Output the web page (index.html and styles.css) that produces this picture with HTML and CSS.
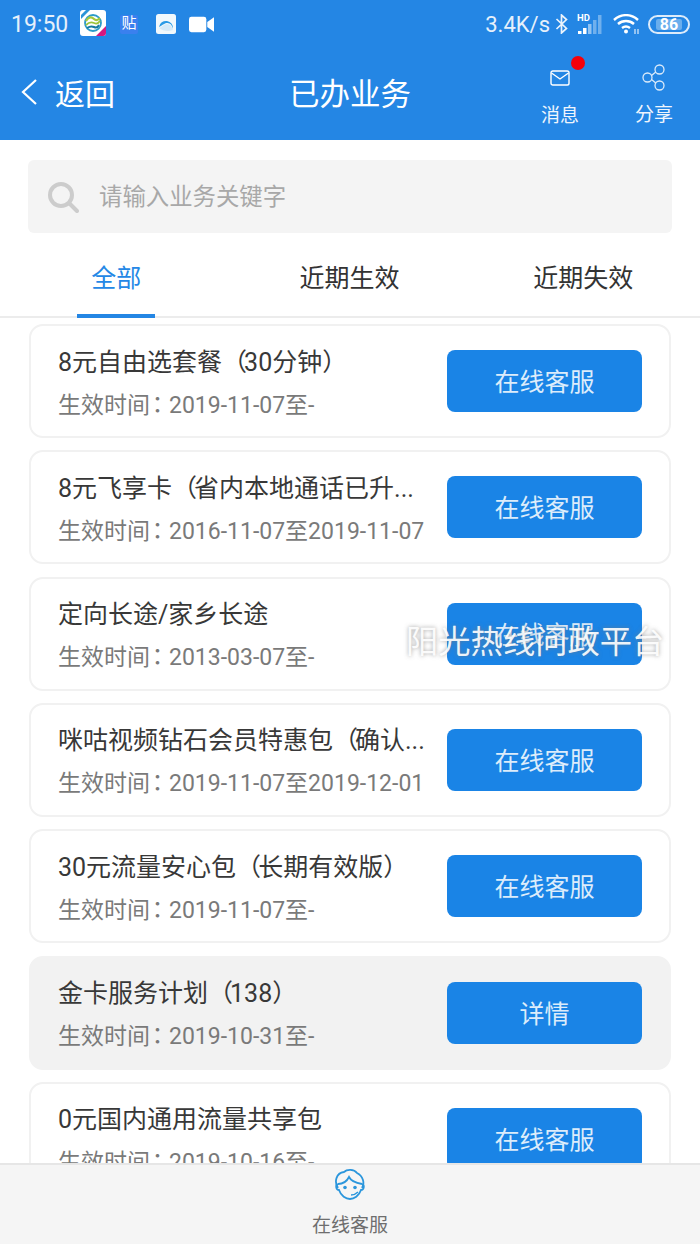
FILE: index.html
```html
<!DOCTYPE html>
<html lang="zh">
<head>
<meta charset="utf-8">
<title>已办业务</title>
<link rel="stylesheet" href="styles.css">
</head>
<body>
<div class="app">
  <header class="head">
    <div class="status">
      <span class="clock">19:50</span>
      <svg class="ic-mobile" viewBox="0 0 26 26"><rect width="26" height="26" rx="3" fill="#fff"/><path d="M16 26L26 16v7a3 3 0 0 1-3 3z" fill="#d6187f"/><path d="M1 5l5-5h4L1 9z" fill="#2a93d8"/><ellipse cx="13" cy="13" rx="8" ry="8" fill="none" stroke="#2c9bc9" stroke-width="1.800"/><path d="M6 11c3-5 6-4 8-2s4 1 6-1" fill="none" stroke="#a6c93a" stroke-width="2.200"/><path d="M6 15c3-3 6-3 8-2s4 1 6-2" fill="none" stroke="#9cc43c" stroke-width="1.800"/><path d="M7 18c3-2 5-2 7-1s4 0 5-2" fill="none" stroke="#15799f" stroke-width="2"/></svg>
      <span class="ic-tie">贴</span>
      <svg class="ic-q" viewBox="0 0 20 20"><rect width="20" height="20" rx="2.500" fill="#f1f8fc"/><path d="M3 13a7 7 0 1 1 14 2c-1-4-2.500-6-5.500-6S7 11 3 13z" fill="#2b9be6"/><path d="M3 14c3-1 5-4 8-4 3 0 5 2 6 6-5 2-10 1-14-2z" fill="#d5eaf8"/></svg>
      <svg class="ic-cam" viewBox="0 0 26 17"><rect width="18" height="16" y=".5" rx="2.500" fill="#fff"/><path d="M19 6l7-5v15l-7-5z" fill="#fff"/></svg>
      <span class="status-gap"></span>
      <span class="speed">3.4K/s</span>
      <svg class="ic-bt" viewBox="0 0 14 20"><path d="M1.500 5l10 9.500L6.500 19V1l5 4.500-10 9.500" fill="none" stroke="#eaf3fc" stroke-width="1.700"/></svg>
      <svg class="ic-signal" viewBox="0 0 27 20"><text class="hd" x="0" y="7">HD</text><rect x="1" y="17" width="3.500" height="3" fill="#fff"/><rect x="6" y="14" width="3.500" height="6" fill="#fff"/><rect x="11" y="10" width="3.500" height="10" fill="#fff" opacity=".5"/><rect x="16" y="6" width="3.500" height="14" fill="#fff" opacity=".35"/><rect x="21" y="1" width="3.500" height="19" fill="#fff" opacity=".35"/></svg>
      <svg class="ic-wifi" viewBox="0 0 27 20"><path d="M1 6c7-6.500 17-6.500 24 0M5 10c4.500-4 11.500-4 16 0M9 14c2.500-2 5.500-2 8 0" fill="none" stroke="#fff" stroke-width="2.400"/><circle cx="13" cy="17.500" r="2" fill="#fff"/><path d="M22 15v5M25 15v5" stroke="#dcebfa" stroke-width="1.200"/></svg>
      <span class="batt"><span class="batt-fill"></span><span class="batt-num">86</span></span>
    </div>
    <div class="bar">
      <div class="back">
        <svg class="ic-back" viewBox="0 0 18 28"><path d="M16 2L3 14l13 12" fill="none" stroke="#fff" stroke-width="2.200"/></svg>
        <span>返回</span>
      </div>
      <h1 class="title">已办业务</h1>
      <div class="actions">
        <div class="action">
          <svg class="ic-mail" viewBox="0 0 20 16"><rect x="1" y="1" width="18" height="14" rx="1.800" fill="none" stroke="#fff" stroke-width="1.400"/><path d="M1.500 3l8.500 6 8.500-6" fill="none" stroke="#fff" stroke-width="1.400"/></svg>
          <span class="dot"></span>
          <span>消息</span>
        </div>
        <div class="action">
          <svg class="ic-share" viewBox="0 0 24 27"><circle cx="17.500" cy="5.500" r="4.500" fill="none" stroke="#dcebfa" stroke-width="1.300"/><circle cx="17.500" cy="21.500" r="4.500" fill="none" stroke="#dcebfa" stroke-width="1.300"/><circle cx="5.500" cy="13.500" r="4.500" fill="none" stroke="#dcebfa" stroke-width="1.300"/><path d="M9.500 11.500l4.300-3.500M9.500 15.500l4.300 3.500" stroke="#dcebfa" stroke-width="1.300"/></svg>
          <span>分享</span>
        </div>
      </div>
    </div>
  </header>

  <div class="search">
    <svg class="ic-search" viewBox="0 0 32 32"><circle cx="14" cy="14" r="11" fill="none" stroke="#ccc" stroke-width="4"/><path d="M23 23l7 7" stroke="#ccc" stroke-width="4" stroke-linecap="round"/></svg>
    <span>请输入业务关键字</span>
  </div>

  <nav class="tabs">
    <div class="tab on">全部</div>
    <div class="tab">近期生效</div>
    <div class="tab">近期失效</div>
  </nav>

  <main class="list">
    <div class="card"><div class="info"><div class="name">8元自由选套餐<span class="pl">（</span>30分钟）</div><div class="date">生效时间<span class="colon">：</span>2019-11-07至-</div></div><div class="btn">在线客服</div></div>
    <div class="card"><div class="info"><div class="name">8元飞享卡<span class="pl">（</span>省内本地通话已升...</div><div class="date">生效时间<span class="colon">：</span>2016-11-07至2019-11-07</div></div><div class="btn">在线客服</div></div>
    <div class="card"><div class="info"><div class="name">定向长途/家乡长途</div><div class="date">生效时间<span class="colon">：</span>2013-03-07至-</div></div><div class="btn">在线客服</div></div>
    <div class="card"><div class="info"><div class="name">咪咕视频钻石会员特惠包<span class="pl">（</span>确认...</div><div class="date">生效时间<span class="colon">：</span>2019-11-07至2019-12-01</div></div><div class="btn">在线客服</div></div>
    <div class="card"><div class="info"><div class="name">30元流量安心包<span class="pl">（</span>长期有效版）</div><div class="date">生效时间<span class="colon">：</span>2019-11-07至-</div></div><div class="btn">在线客服</div></div>
    <div class="card gray"><div class="info"><div class="name">金卡服务计划<span class="pl">（</span>138）</div><div class="date">生效时间<span class="colon">：</span>2019-10-31至-</div></div><div class="btn">详情</div></div>
    <div class="card"><div class="info"><div class="name">0元国内通用流量共享包</div><div class="date">生效时间<span class="colon">：</span>2019-10-16至-</div></div><div class="btn">在线客服</div></div>
  </main>

  <footer class="foot">
    <svg class="ic-agent" viewBox="0 0 32 32"><path d="M4 20C0 14 2 5 10 4c3-3 10-3 13 1 6 3 8 10 5 15" fill="none" stroke="#2b96dc" stroke-width="1.800"/><path d="M4 16c5 0 9-3 11-7 2 4 7 6 13 7" fill="none" stroke="#2b96dc" stroke-width="1.800"/><path d="M4 16c-3 1-2 6 1 6 2 6 7 9 11 9s9-3 11-9c3 0 4-5 1-6" fill="none" stroke="#2b96dc" stroke-width="1.800"/><circle cx="11" cy="19.500" r="1.800" fill="#2b96dc"/><circle cx="21" cy="19.500" r="1.800" fill="#2b96dc"/><path d="M24 24c-2 2-4 3-7 3" fill="none" stroke="#2b96dc" stroke-width="1.400"/></svg>
    <span>在线客服</span>
  </footer>

  <div class="mark">阳光热线问政平台</div>
</div>
</body>
</html>
```

FILE: styles.css
```css
* { box-sizing: border-box; }
html, body { margin: 0; padding: 0; }
body {
  width: 700px;
  height: 1244px;
  overflow: hidden;
  background: #fff;
  font-family: Roboto, "Noto Sans CJK SC", sans-serif;
}
.app { position: relative; width: 700px; height: 1244px; overflow: hidden; }

.head { height: 140px; background: #2486e4; color: #fff; display: flex; flex-direction: column; }
.status { height: 48px; display: flex; align-items: center; padding: 0 10px 0 11px; color: #e6f0fb; }
.clock { font-size: 23px; width: 69px; }
.ic-mobile { width: 26px; height: 26px; margin-top: -2px; }
.ic-tie { width: 18px; height: 19px; margin-left: 14px; background: #3a80ee; color: #fff; border-radius: 2px; font-size: 15px; line-height: 17px; text-align: center; }
.ic-q { width: 20px; height: 20px; margin-left: 18px; }
.ic-cam { width: 25px; height: 17px; margin-left: 13px; }
.status-gap { flex: 1; }
.speed { font-size: 22px; }
.ic-bt { width: 14px; height: 20px; margin-left: 5px; }
.ic-signal { width: 27px; height: 20px; margin-left: 8px; overflow: visible; }
.hd { font: 700 9.500px Roboto, sans-serif; fill: #fff; }
.ic-wifi { width: 27px; height: 20px; margin-left: 9px; }
.batt { position: relative; width: 42px; height: 19px; margin-left: 8px; border: 2px solid #dcebfa; border-radius: 10px; display: flex; align-items: center; justify-content: center; }
.batt-fill { position: absolute; left: 6px; top: 2px; bottom: 2px; width: 26px; background: #6aaeed; border-radius: 2px; }
.batt-num { position: relative; font: 700 16px/15px Roboto, sans-serif; color: #fff; }

.bar { flex: 1; display: grid; grid-template-columns: 1fr auto 1fr; align-items: center; }
.back { display: flex; align-items: center; padding-left: 20px; font-size: 30px; gap: 17px; margin-top: -4px; }
.ic-back { width: 18px; height: 28px; }
.title { margin: -4px 0 0; font-size: 30.500px; font-weight: 400; }
.actions { display: flex; justify-content: flex-end; margin-right: -1px; }
.action { position: relative; width: 94px; padding-top: 6px; display: flex; flex-direction: column; align-items: center; font-size: 19px; color: #eef5fd; line-height: 26px; }
.ic-mail { width: 20px; height: 16px; margin: 5px 0 17px; }
.ic-share { width: 24px; height: 27px; margin: -1px 0 11px; }
.dot { position: absolute; top: -3px; left: 58px; width: 14px; height: 14px; border-radius: 50%; background: #f5000a; }

.search { margin: 20px 28px 0; height: 73px; background: #f4f4f4; border-radius: 6px; display: flex; align-items: center; padding-left: 19px; gap: 20px; font-size: 23.400px; color: #a8a8a8; }
.search span { margin-top: -3px; }
.ic-search { width: 32px; height: 32px; }

.tabs { height: 85px; display: flex; border-bottom: 2px solid #ececec; }
.tab { width: 234px; padding-top: 2px; text-align: center; font-size: 25px; color: #333; line-height: 88px; }
.tab.on { color: #2488e6; position: relative; }
.tab.on::after { content: ""; position: absolute; left: 77px; bottom: -2px; width: 78px; height: 4px; background: #2486e4; }
.tabs .tab:first-child { width: 233px; }

.list { padding: 6px 29px 0; display: flex; flex-direction: column; gap: 12.330px; }
.card { height: 114px; flex: none; border: 2px solid #f1f1f1; border-radius: 14px; display: flex; align-items: center; padding: 0 27px; background: #fff; }
.card.gray { background: #f2f2f2; border-color: #f2f2f2; }
.info { flex: 1; min-width: 0; padding-top: 5px; }
.name { font-size: 25px; color: #383838; line-height: 34px; white-space: nowrap; margin-top: 1px; }
.pl { letter-spacing: -3px; }
.date { font-size: 23px; color: #7a7a7a; line-height: 34px; margin-top: 6px; white-space: nowrap; }
.colon { display: inline-block; width: 19px; font-family: "Noto Sans CJK TC", sans-serif; transform: translateX(-4px); }
.btn { flex: none; width: 195px; height: 62px; padding-top: 2px; border-radius: 8px; background: #1a84e6; color: #dcecfb; font-size: 25px; line-height: 62px; text-align: center; }

.foot { position: absolute; left: 0; right: 0; bottom: 0; height: 81px; background: #f5f5f5; border-top: 2px solid #e6e6e6; display: flex; flex-direction: column; align-items: center; font-size: 19px; color: #6e6e6e; }
.ic-agent { width: 32px; height: 32px; margin-top: 3px; }
.foot span { line-height: 26px; margin-top: 13px; }

.mark { position: absolute; left: 406px; top: 620px; font-size: 32.300px; line-height: 44px; color: rgba(255,255,255,.92); text-shadow: 0 0 4px rgba(120,120,120,.7); white-space: nowrap; }
```
